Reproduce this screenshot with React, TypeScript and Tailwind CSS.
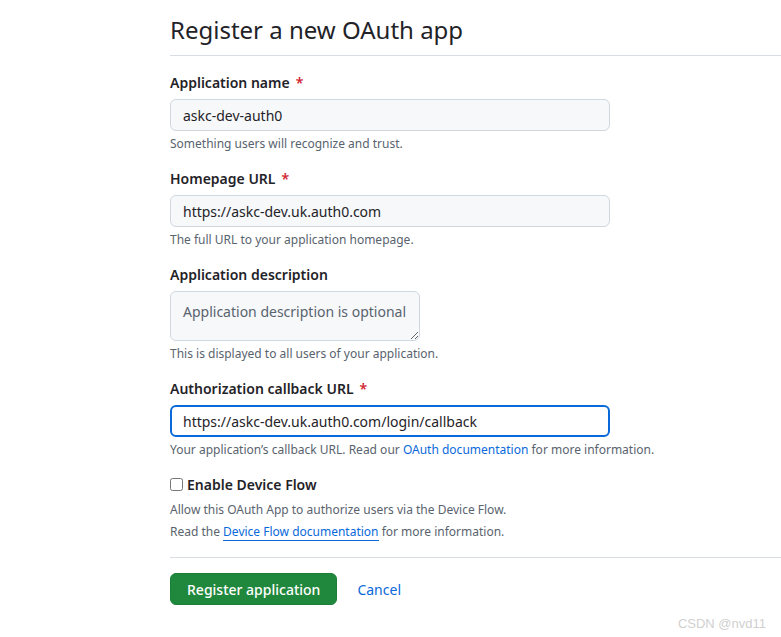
import React from 'react';

const Label: React.FC<{ text: string; required?: boolean }> = ({ text, required }) => (
  <label className="block text-[14px] leading-[21px] font-semibold text-[#1f2328]">
    {text}
    {required && <span className="text-[#d1242f] ml-[6px]">*</span>}
  </label>
);

const Note: React.FC<{ children: React.ReactNode }> = ({ children }) => (
  <p className="mt-[4px] text-[12px] leading-[18px] text-[#59636e]">{children}</p>
);

export default function App() {
  return (
    <div
      className="min-h-[637px] bg-white text-[#1f2328] pl-[170px] relative"
      style={{ fontFamily: '"Noto Sans", "Open Sans", sans-serif' }}
    >
      <div className="pt-[12px] pb-[7px] border-b border-[#d8dee4]">
        <h1 className="text-[24px] leading-[36px] font-normal">Register a new OAuth app</h1>
      </div>

      <form className="pt-[16px]">
        <div className="mb-[15px]">
          <Label text="Application name" required />
          <input
            readOnly
            value="askc-dev-auth0"
            className="mt-[6px] block w-[440px] h-[32px] px-[12px] text-[14px] text-[#1f2328] bg-[#f6f8fa] border border-[#d0d7de] rounded-[6px] outline-none"
          />
          <Note>Something users will recognize and trust.</Note>
        </div>

        <div className="mb-[15px]">
          <Label text="Homepage URL" required />
          <input
            readOnly
            value="https://askc-dev.uk.auth0.com"
            className="mt-[6px] block w-[440px] h-[32px] px-[12px] text-[14px] text-[#1f2328] bg-[#f6f8fa] border border-[#d0d7de] rounded-[6px] outline-none"
          />
          <Note>The full URL to your application homepage.</Note>
        </div>

        <div className="mb-[15px]">
          <Label text="Application description" />
          <textarea
            readOnly
            placeholder="Application description is optional"
            className="mt-[6px] block w-[250px] h-[50px] px-[12px] pt-[9px] pb-[4px] text-[14px] leading-[21px] bg-[#f6f8fa] border border-[#d0d7de] rounded-[6px] outline-none resize placeholder:text-[#59636e]"
          />
          <Note>This is displayed to all users of your application.</Note>
        </div>

        <div className="mb-[15px]">
          <Label text="Authorization callback URL" required />
          <input
            readOnly
            value="https://askc-dev.uk.auth0.com/login/callback"
            className="mt-[6px] block w-[440px] h-[32px] px-[11px] text-[14px] text-[#1f2328] bg-white border-2 border-[#0969da] rounded-[6px] outline-none"
          />
          <Note>
            Your application’s callback URL. Read our{' '}
            <a className="text-[#0969da]">OAuth documentation</a> for more information.
          </Note>
        </div>

        <div>
          <label className="flex items-center text-[14px] leading-[21px] font-semibold text-[#1f2328]">
            <input type="checkbox" className="w-[13px] h-[13px] mr-[4px] ml-0" />
            Enable Device Flow
          </label>
          <p className="mt-[6px] text-[12px] leading-[18px] text-[#59636e]">
            Allow this OAuth App to authorize users via the Device Flow.
          </p>
          <p className="mt-[4px] text-[12px] leading-[18px] text-[#59636e]">
            Read the{' '}
            <a className="text-[#0969da] border-b border-[#0969da]">Device Flow documentation</a> for more
            information.
          </p>
        </div>

        <div className="mt-[16px] border-t border-[#d8dee4] pt-[15px] flex items-center">
          <button
            type="button"
            className="h-[32px] px-[16px] bg-[#1f883d] text-white text-[14px] font-medium rounded-[6px] border border-[#1a7f37]"
          >
            Register application
          </button>
          <a className="ml-[20px] text-[14px] text-[#0969da]">Cancel</a>
        </div>
      </form>

      <div
        className="absolute right-[15px] top-[614px] text-[13px] text-[#d0d0d0]"
        style={{ fontFamily: '"Liberation Sans", sans-serif' }}
      >
        CSDN @nvd11
      </div>
    </div>
  );
}
